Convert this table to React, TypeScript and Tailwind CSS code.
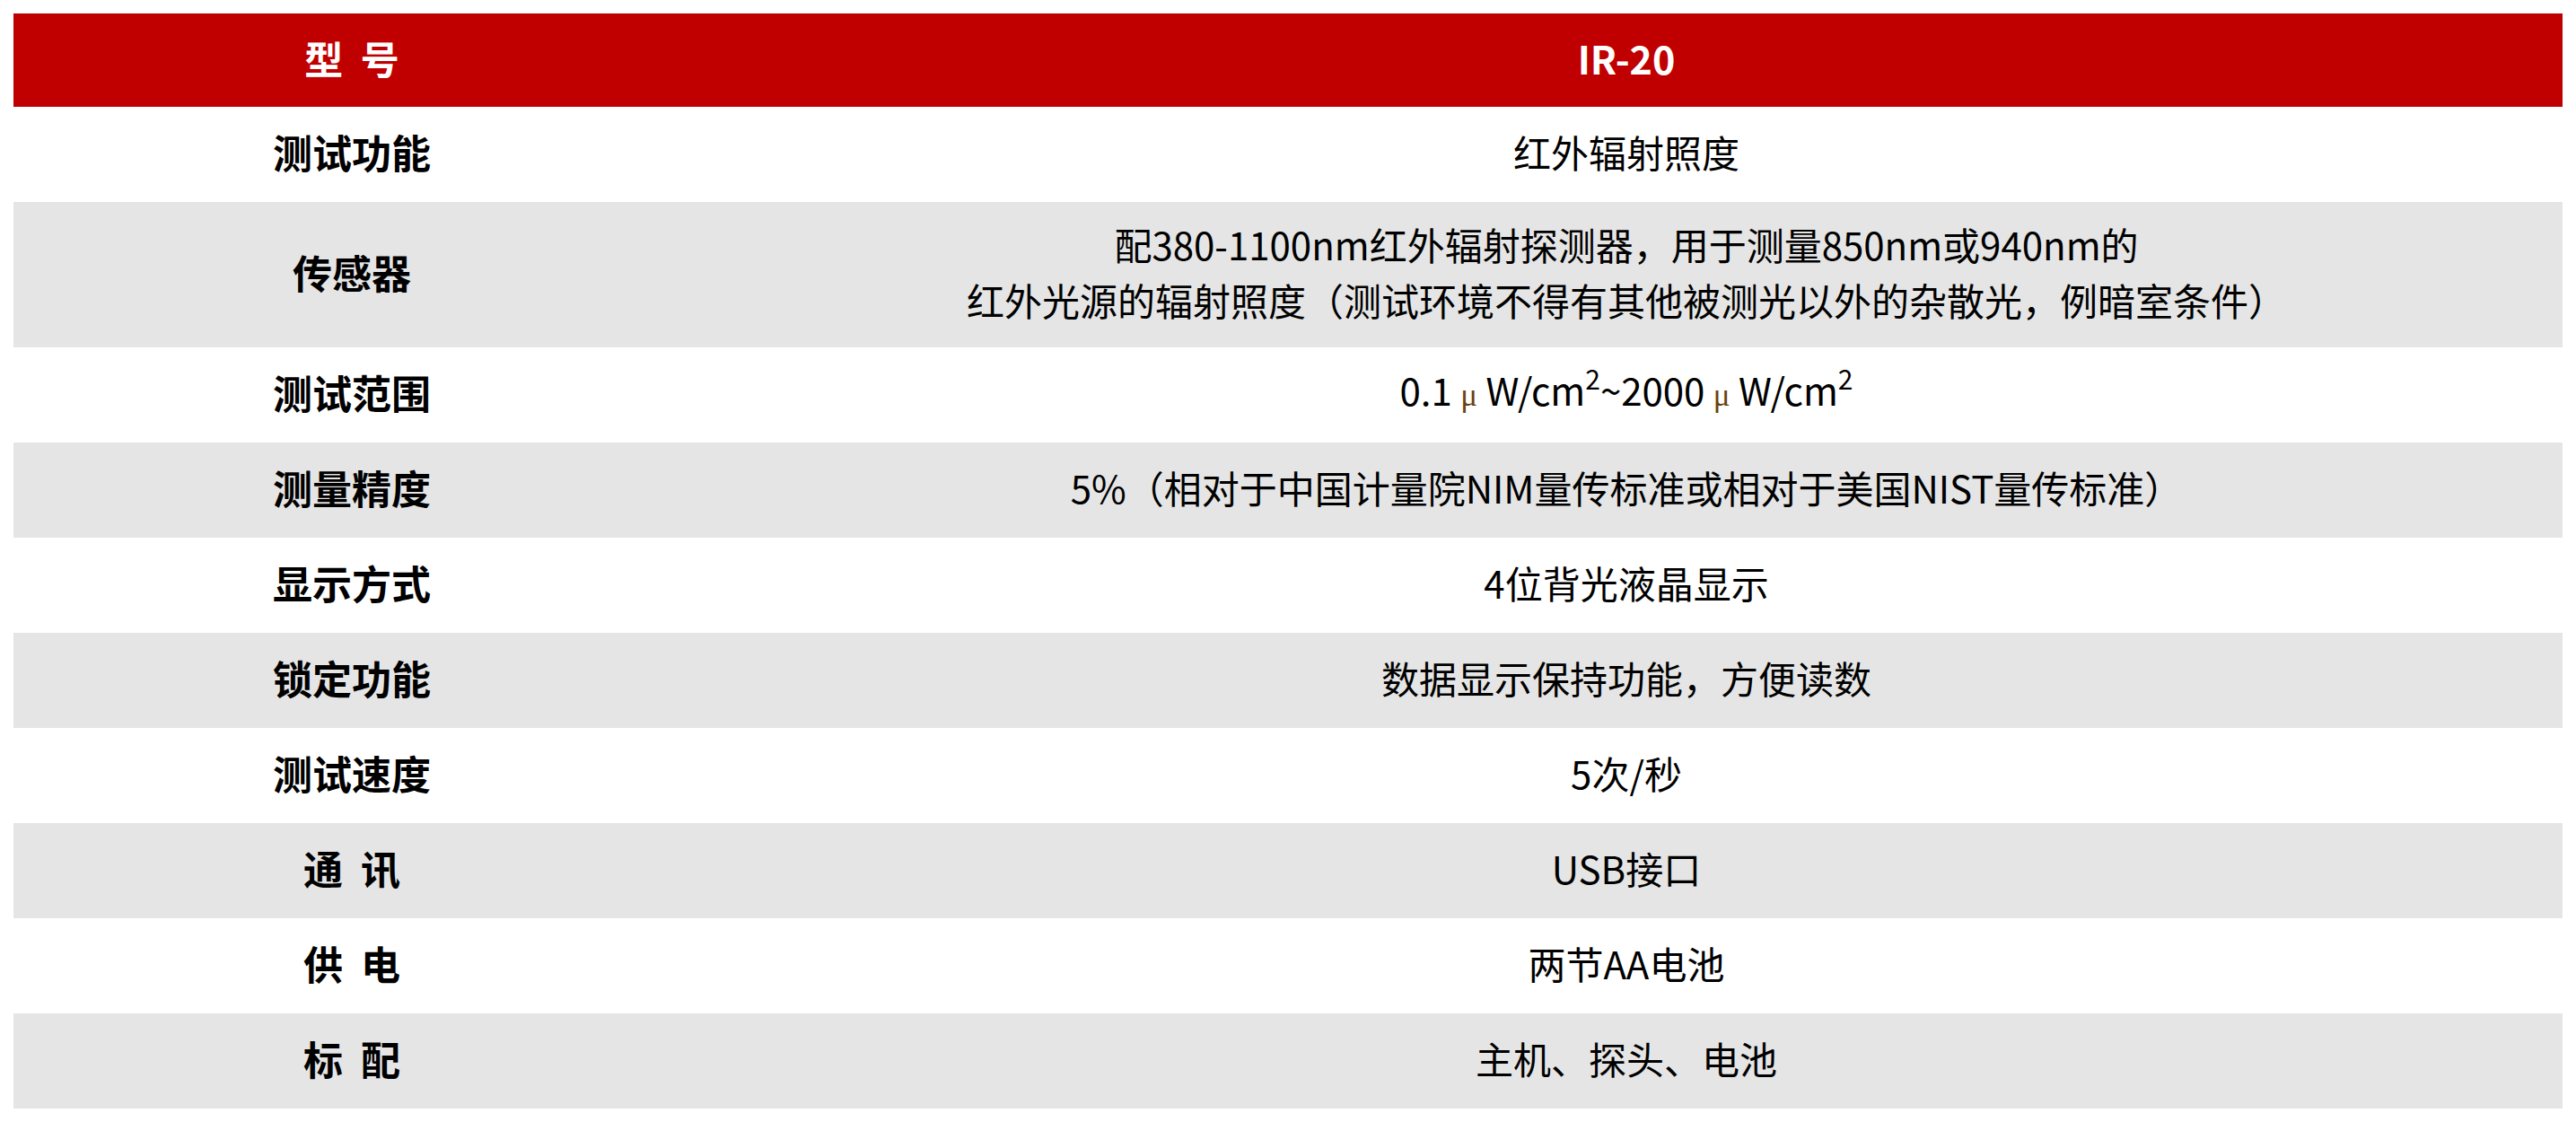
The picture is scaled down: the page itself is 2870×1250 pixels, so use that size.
import React from "react";

const font = { fontFamily: '"Noto Sans CJK SC", "Noto Sans", sans-serif' };

type Row = { label: string; value: React.ReactNode; tall?: boolean };

const Mu = () => (
  <span className="text-[35px] text-[#6b4210] [font-family:'Liberation_Serif',serif]">μ</span>
);

const Sup = () => <sup className="text-[30px] -top-[0.6em] leading-none">2</sup>;

const rows: Row[] = [
  { label: "测试功能", value: "红外辐射照度" },
  {
    label: "传感器",
    tall: true,
    value: (
      <>
        配380-1100nm红外辐射探测器，用于测量850nm或940nm的
        <br />
        红外光源的辐射照度（测试环境不得有其他被测光以外的杂散光，例暗室条件）
      </>
    ),
  },
  {
    label: "测试范围",
    value: (
      <>
        0.1 <Mu /> W/cm<Sup />~2000 <Mu /> W/cm<Sup />
      </>
    ),
  },
  { label: "测量精度", value: "5%（相对于中国计量院NIM量传标准或相对于美国NIST量传标准）" },
  { label: "显示方式", value: "4位背光液晶显示" },
  { label: "锁定功能", value: "数据显示保持功能，方便读数" },
  { label: "测试速度", value: "5次/秒" },
  { label: "通\u00a0\u00a0讯", value: "USB接口" },
  { label: "供\u00a0\u00a0电", value: "两节AA电池" },
  { label: "标\u00a0\u00a0配", value: "主机、探头、电池" },
];

export default function App() {
  return (
    <div className="w-[2870px] h-[1250px] bg-white pt-[15px] px-[15px]" style={font}>
      <div className="flex flex-col w-[2840px]">
        <div className="flex h-[104px] pb-[6px] bg-[#c00000] text-white font-bold text-[43px] leading-none">
          <div className="w-[754px] flex items-center justify-center">型&nbsp;&nbsp;号</div>
          <div className="flex-1 flex items-center justify-center">IR-20</div>
        </div>
        {rows.map((r, i) => (
          <div
            key={i}
            className={`flex pb-[6px] ${r.tall ? "h-[162px]" : "h-[106px]"} ${
              i % 2 === 1 ? "bg-[#e5e5e5]" : "bg-white"
            } text-black text-[42px]`}
          >
            <div className="w-[754px] flex items-center justify-center font-bold leading-none text-[44px]">
              {r.label}
            </div>
            <div className="flex-1 flex items-center justify-center text-center leading-[62px]">
              <div>{r.value}</div>
            </div>
          </div>
        ))}
      </div>
    </div>
  );
}
